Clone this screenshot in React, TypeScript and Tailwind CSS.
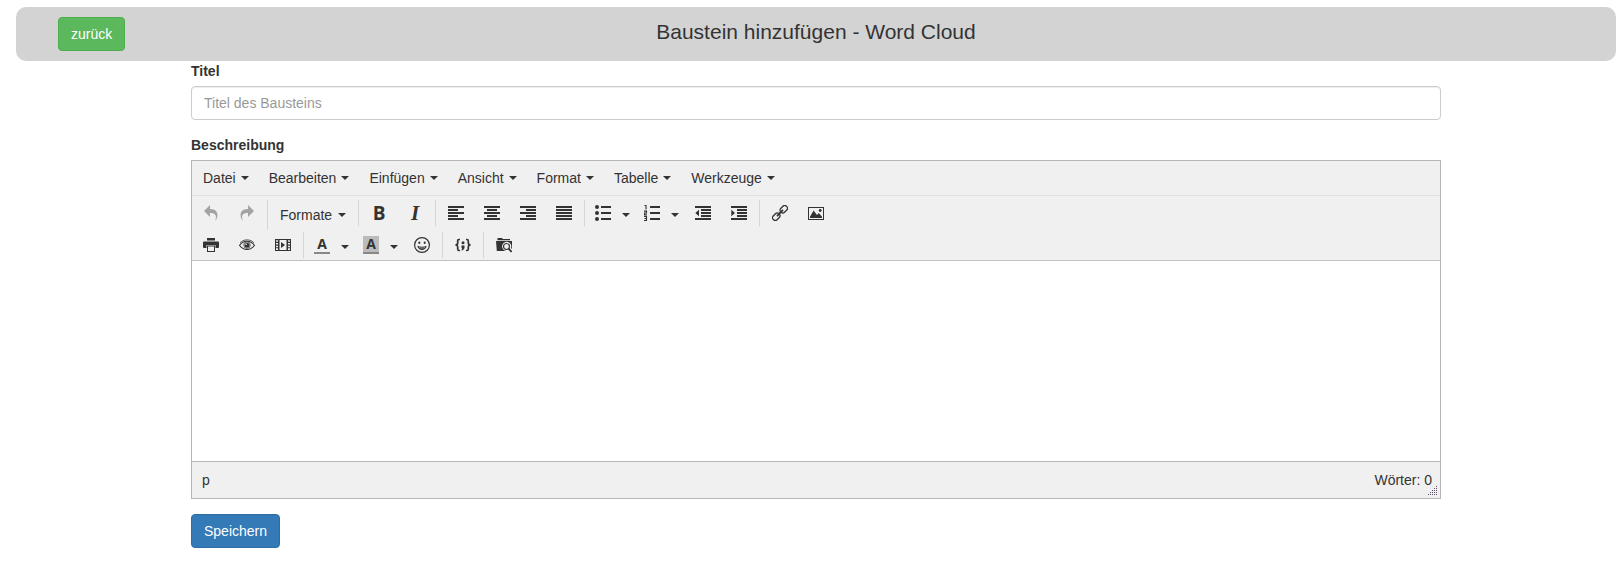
import type { ReactNode } from "react";

const FONT = "font-['Liberation_Sans',Arial,sans-serif]";

function Svg({ children, box = "0 0 16 16" }: { children: ReactNode; box?: string }) {
  return (
    <svg viewBox={box} className="block size-4 shrink-0" fill="currentColor" aria-hidden="true">
      {children}
    </svg>
  );
}

function Caret() {
  return (
    <span className="block size-0 shrink-0 border-x-4 border-t-4 border-x-transparent border-t-[#333]" />
  );
}

const icons = {
  undo: (
    <Svg box="0 0 1024 1024">
      <path d="M761.862 1024c113.726-206.032 132.888-520.306-313.862-509.824v253.824l-384-384 384-384v248.372c534.962-13.942 594.57 472.214 313.862 775.628z" />
    </Svg>
  ),
  redo: (
    <Svg box="0 0 1024 1024">
      <path d="M576 248.372v-248.372l384 384-384 384v-253.824c-446.75-10.482-427.588 303.792-313.86 509.824-280.712-303.414-221.1-789.57 313.86-775.628z" />
    </Svg>
  ),
  alignLeft: (
    <Svg>
      <path d="M0 1h16v2H0zM0 4h10v2H0zM0 7h16v2H0zM0 10h10v2H0zM0 13h16v2H0z" />
    </Svg>
  ),
  alignCenter: (
    <Svg>
      <path d="M0 1h16v2H0zM3 4h10v2H3zM0 7h16v2H0zM3 10h10v2H3zM0 13h16v2H0z" />
    </Svg>
  ),
  alignRight: (
    <Svg>
      <path d="M0 1h16v2H0zM6 4h10v2H6zM0 7h16v2H0zM6 10h10v2H6zM0 13h16v2H0z" />
    </Svg>
  ),
  justify: (
    <Svg>
      <path d="M0 1h16v2H0zM0 4h16v2H0zM0 7h16v2H0zM0 10h16v2H0zM0 13h16v2H0z" />
    </Svg>
  ),
  bullets: (
    <Svg>
      <path d="M6 1h10v2H6zM6 7h10v2H6zM6 13h10v2H6z" />
      <circle cx="2" cy="2" r="2" />
      <circle cx="2" cy="8" r="2" />
      <circle cx="2" cy="14" r="2" />
    </Svg>
  ),
  numbers: (
    <Svg>
      <path d="M6 1h10v2H6zM6 7h10v2H6zM6 13h10v2H6z" />
      <path
        d="M.5 .5h1.500V4.500M0 6.100h2.500v1.900H.5v1.900H3M0 11.500h2.500v4H0M.5 13.500h2"
        fill="none"
        stroke="currentColor"
        strokeWidth="1.100"
      />
    </Svg>
  ),
  outdent: (
    <Svg>
      <path d="M0 1h16v2H0zM6 4h10v2H6zM6 7h10v2H6zM6 10h10v2H6zM0 13h16v2H0zM4 4.8v6.4L.3 8z" />
    </Svg>
  ),
  indent: (
    <Svg>
      <path d="M0 1h16v2H0zM6 4h10v2H6zM6 7h10v2H6zM6 10h10v2H6zM0 13h16v2H0zM.3 4.8v6.4L4 8z" />
    </Svg>
  ),
  link: (
    <Svg>
      <g transform="rotate(-45 8 8)" fill="none" stroke="currentColor" strokeWidth="1.3">
        <rect x="-1.3" y="5.3" width="8" height="5.4" rx="2.4" />
        <rect x="9.3" y="5.3" width="8" height="5.4" rx="2.4" />
        <path d="M4.4 8h7.2" strokeWidth="1.8" strokeLinecap="round" />
      </g>
    </Svg>
  ),
  image: (
    <Svg>
      <path d="M0 2h16v13H0zM1 3v11h14V3z" fillRule="evenodd" />
      <path d="M2 13V11.8L5.6 5.5 9 10l1.8-2L14 11.8V13z" />
      <circle cx="12.2" cy="5.5" r="1.4" />
    </Svg>
  ),
  print: (
    <Svg>
      <path d="M4 1h8v2.5H4zM1 4.5h14a1 1 0 0 1 1 1V10a1 1 0 0 1-1 1h-2.500V8h-9v3H1a1 1 0 0 1-1-1V5.500a1 1 0 0 1 1-1z" />
      <path d="M4 8.500h8V15H4zM5 9.500V14h6V9.500z" fillRule="evenodd" />
    </Svg>
  ),
  preview: (
    <Svg>
      <path
        d="M.5 8.300C2.500 5.500 5 4.200 8 4.200s5.500 1.300 7.500 4.100C13.500 11.200 11 12.500 8 12.500S2.500 11.200.5 8.300z"
        fill="none"
        stroke="currentColor"
        strokeWidth="1.100"
      />
      <path d="M1 5.800C3 3.700 5.400 2.900 8 2.900s5 .8 7 2.900" fill="none" stroke="currentColor" strokeWidth=".8" />
      <circle cx="8" cy="8.200" r="3.300" fill="none" stroke="currentColor" strokeWidth=".7" />
      <circle cx="8" cy="8.200" r="2.500" />
      <circle cx="7.200" cy="7.200" r=".8" fill="#f0f0f0" />
    </Svg>
  ),
  media: (
    <Svg>
      <path
        d="M0 2h16v12H0zM4.500 3v10h7V3zM1 3.200v1.600h2V3.200zM1 6v1.600h2V6zM1 8.700v1.600h2V8.700zM1 11.300v1.600h2v-1.600zM13 3.200v1.600h2V3.200zM13 6v1.600h2V6zM13 8.700v1.600h2V8.700zM13 11.300v1.600h2v-1.600z"
        fillRule="evenodd"
      />
      <path d="M6 5v6l4-3z" />
    </Svg>
  ),
  smile: (
    <Svg>
      <circle cx="8" cy="8" r="7.400" fill="none" stroke="currentColor" strokeWidth="1.200" />
      <ellipse cx="5.300" cy="5.700" rx="1" ry="1.200" />
      <ellipse cx="10.700" cy="5.700" rx="1" ry="1.200" />
      <path d="M3.300 8.800c2.800 1.300 6.600 1.300 9.400 0C12.300 11.500 10.500 13 8 13s-4.300-1.500-4.700-4.200z" />
      <path d="M5 10.500c2 .7 4 .7 6 0" fill="none" stroke="#f0f0f0" strokeWidth=".5" />
    </Svg>
  ),
  code: (
    <Svg>
      <path
        d="M5 2.500H4C3 2.500 2.700 3 2.700 4v2C2.700 7.300 2 8 .4 8 2 8 2.700 8.700 2.700 10v2c0 1 .3 1.500 1.300 1.500h1M11 2.500h1c1 0 1.300.5 1.300 1.500v2c0 1.300.7 2 2.300 2-1.600 0-2.300.7-2.300 2v2c0 1-.3 1.500-1.300 1.500h-1"
        fill="none"
        stroke="currentColor"
        strokeWidth="1.700"
      />
      <circle cx="8" cy="5.800" r="1.500" />
      <path d="M6.500 8.500h3v2.400L8 13.200H6.400l.8-2.200h-.7z" />
    </Svg>
  ),
  browse: (
    <Svg>
      <path d="M1.500 1H6l.8 1H14v1.200H1.500zM0 4h16v8l-1-1a4.600 4.600 0 1 0-5 3H.8z" />
      <circle cx="10.500" cy="9.500" r="3" fill="none" stroke="currentColor" strokeWidth="1.200" />
      <path d="M12.600 11.600l3 3.400" stroke="currentColor" strokeWidth="1.800" />
    </Svg>
  ),
};

function Glyph({ children }: { children: ReactNode }) {
  return <span className="flex h-4 w-4 items-center justify-center leading-4">{children}</span>;
}

function Tool({ label, disabled, children }: { label: string; disabled?: boolean; children: ReactNode }) {
  return (
    <button
      type="button"
      aria-label={label}
      disabled={disabled}
      className="flex h-[26px] items-center px-2.5 disabled:opacity-40"
    >
      {children}
    </button>
  );
}

function Split({ label, children }: { label: string; children: ReactNode }) {
  return (
    <div className="flex h-[26px]">
      <button type="button" aria-label={label} className="flex items-center px-2">
        {children}
      </button>
      <button type="button" aria-label={`${label} Optionen`} className="flex items-center pt-1 pr-1.5 pl-[3px]">
        <Caret />
      </button>
    </div>
  );
}

function Group({ children }: { children: ReactNode }) {
  return (
    <div className="ml-0.5 flex border-l border-[#d6d6d6] pl-0.5 first:ml-0 first:border-l-0 first:pl-px">
      {children}
    </div>
  );
}

const menus = ["Datei", "Bearbeiten", "Einfügen", "Ansicht", "Format", "Tabelle", "Werkzeuge"];

function Editor() {
  return (
    <div className="border border-[#b7b7b7] bg-white" role="group" aria-labelledby="beschreibung">
      <div className="flex flex-wrap border-b border-[#e2e2e2] bg-[#f0f0f0] pl-px" role="menubar">
        {menus.map((menu) => (
          <button key={menu} type="button" role="menuitem" className="flex h-[34px] items-center gap-[5px] px-2.5">
            {menu}
            <Caret />
          </button>
        ))}
      </div>

      <div className="flex flex-col gap-0.5 border-b border-[#c2c2c2] bg-[#f0f0f0] pt-1 pb-0.5">
        <div className="flex flex-wrap items-start" role="toolbar">
          <Group>
            <Tool label="Rückgängig" disabled>{icons.undo}</Tool>
            <Tool label="Wiederholen" disabled>{icons.redo}</Tool>
          </Group>
          <Group>
            <button type="button" className="flex h-[30px] items-center gap-1.5 px-2.5">
              Formate
              <Caret />
            </button>
          </Group>
          <Group>
            <Tool label="Fett">
              <Glyph><span className="font-['Open_Sans',sans-serif] text-[19px] font-bold">B</span></Glyph>
            </Tool>
            <Tool label="Kursiv">
              <Glyph><span className="font-['Liberation_Serif',serif] text-[21px] font-bold italic">I</span></Glyph>
            </Tool>
          </Group>
          <Group>
            <Tool label="Linksbündig">{icons.alignLeft}</Tool>
            <Tool label="Zentriert">{icons.alignCenter}</Tool>
            <Tool label="Rechtsbündig">{icons.alignRight}</Tool>
            <Tool label="Blocksatz">{icons.justify}</Tool>
          </Group>
          <Group>
            <Split label="Aufzählung">{icons.bullets}</Split>
            <Split label="Nummerierte Liste">{icons.numbers}</Split>
            <Tool label="Einzug verkleinern">{icons.outdent}</Tool>
            <Tool label="Einzug vergrößern">{icons.indent}</Tool>
          </Group>
          <Group>
            <Tool label="Link einfügen">{icons.link}</Tool>
            <Tool label="Bild einfügen">{icons.image}</Tool>
          </Group>
        </div>

        <div className="flex flex-wrap items-start" role="toolbar">
          <Group>
            <Tool label="Drucken">{icons.print}</Tool>
            <Tool label="Vorschau">{icons.preview}</Tool>
            <Tool label="Video einfügen">{icons.media}</Tool>
          </Group>
          <Group>
            <Split label="Textfarbe">
              <span className="flex h-[18px] w-4 items-center justify-center border-b-2 border-[#888] font-['Open_Sans',sans-serif] font-bold leading-4">
                A
              </span>
            </Split>
            <Split label="Hintergrundfarbe">
              <span className="flex h-[18px] w-4 items-center justify-center border-b-2 border-[#888] bg-[#bbb] font-['Open_Sans',sans-serif] font-bold leading-4">
                A
              </span>
            </Split>
            <Tool label="Emoticons">{icons.smile}</Tool>
          </Group>
          <Group>
            <Tool label="Quellcode">{icons.code}</Tool>
          </Group>
          <Group>
            <Tool label="Dateien durchsuchen">{icons.browse}</Tool>
          </Group>
        </div>
      </div>

      <textarea
        aria-labelledby="beschreibung"
        className="block h-[200px] w-full resize-none bg-white px-2.5 py-2 outline-none"
      />

      <div className="relative flex h-[37px] items-center justify-between border-t border-[#b7b7b7] bg-[#f0f0f0] pr-2 pl-2.5">
        <span>p</span>
        <span>Wörter: 0</span>
        <svg viewBox="0 0 10 10" className="absolute right-[2px] bottom-[2px] size-2.5 text-[#5f5068]" fill="currentColor" shapeRendering="crispEdges" aria-hidden="true">
          <path d="M8 0h1v1H8zM6 2h1v1H6zM8 2h1v1H8zM4 4h1v1H4zM6 4h1v1H6zM8 4h1v1H8zM2 6h1v1H2zM4 6h1v1H4zM6 6h1v1H6zM8 6h1v1H8zM0 8h1v1H0zM2 8h1v1H2zM4 8h1v1H4zM6 8h1v1H6zM8 8h1v1H8z" />
        </svg>
      </div>
    </div>
  );
}

export default function App() {
  return (
    <div className={`pt-[7px] pr-1.5 pl-4 text-sm leading-5 text-[#333] ${FONT}`}>
      <header className="grid h-[54px] grid-cols-[1fr_auto_1fr] items-start rounded-[10px] bg-[#d3d3d3] px-[42px] pt-2.5">
        <button
          type="button"
          className="h-[34px] justify-self-start rounded border border-[#4cae4c] bg-[#5cb85c] px-3 text-white"
        >
          zurück
        </button>
        <h1 className="text-[21px] leading-[30px]">Baustein hinzufügen - Word Cloud</h1>
      </header>

      <form className="mx-auto w-4/5 px-[15px]">
        <label htmlFor="titel" className="mb-[5px] block font-bold">
          Titel
        </label>
        <input
          id="titel"
          type="text"
          placeholder="Titel des Bausteins"
          className="mb-[15px] block h-[34px] w-full rounded border border-[#ccc] bg-white px-3 shadow-[inset_0_1px_1px_rgba(0,0,0,0.075)] placeholder:text-[#999]"
        />
        <div id="beschreibung" className="mb-[5px] font-bold">
          Beschreibung
        </div>
        <Editor />
        <button
          type="button"
          className="mt-[15px] block h-[34px] rounded border border-[#2e6da4] bg-[#337ab7] px-3 text-white"
        >
          Speichern
        </button>
      </form>
    </div>
  );
}
